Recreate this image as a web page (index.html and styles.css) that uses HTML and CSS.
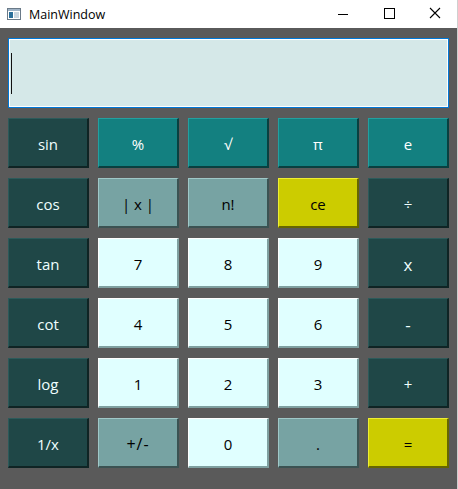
FILE: index.html
```html
<!DOCTYPE html>
<html>
<head>
<meta charset="utf-8">
<link rel="stylesheet" href="styles.css">
</head>
<body>
<div class="window">
  <div class="titlebar">
    <svg class="appicon" width="14" height="12" viewBox="0 0 14 12">
      <rect x="0.5" y="0.5" width="13" height="11" fill="#fff" stroke="#6a7a88"/>
      <rect x="1" y="1" width="12" height="2" fill="#9fb3c6"/>
      <rect x="2" y="4" width="4" height="6" fill="#2a6f9a"/>
      <rect x="7" y="4" width="5" height="6" fill="#c9d6e0"/>
    </svg>
    <span class="title">MainWindow</span>
    <div class="controls">
      <svg class="ctl" width="46" height="28" viewBox="0 0 46 28"><line x1="18" y1="14.5" x2="28" y2="14.5" stroke="#000" stroke-width="1"/></svg>
      <svg class="ctl" width="46" height="28" viewBox="0 0 46 28"><rect x="18.5" y="8.5" width="10" height="10" fill="none" stroke="#000" stroke-width="1"/></svg>
      <svg class="ctl" width="46" height="28" viewBox="0 0 46 28"><path d="M18 8 L28 18 M28 8 L18 18" stroke="#000" stroke-width="1.1"/></svg>
    </div>
  </div>
  <div class="content">
    <div class="display"><span class="cursor"></span></div>
    <div class="grid">
      <div class="btn dark">sin</div>
      <div class="btn teal">%</div>
      <div class="btn teal">√</div>
      <div class="btn teal">π</div>
      <div class="btn teal">e</div>

      <div class="btn dark">cos</div>
      <div class="btn gray">| x |</div>
      <div class="btn gray">n!</div>
      <div class="btn yellow">ce</div>
      <div class="btn dark">÷</div>

      <div class="btn dark">tan</div>
      <div class="btn light">7</div>
      <div class="btn light">8</div>
      <div class="btn light">9</div>
      <div class="btn dark big">x</div>

      <div class="btn dark">cot</div>
      <div class="btn light">4</div>
      <div class="btn light">5</div>
      <div class="btn light">6</div>
      <div class="btn dark big">-</div>

      <div class="btn dark">log</div>
      <div class="btn light">1</div>
      <div class="btn light">2</div>
      <div class="btn light">3</div>
      <div class="btn dark">+</div>

      <div class="btn dark">1/x</div>
      <div class="btn gray wide">+/-</div>
      <div class="btn light">0</div>
      <div class="btn gray">.</div>
      <div class="btn yellow">=</div>
    </div>
  </div>
</div>
</body>
</html>
```
FILE: styles.css
```css
* { box-sizing: border-box; }
html, body { margin: 0; padding: 0; }
body { width: 458px; height: 489px; overflow: hidden; background: #5a5a5a; }

.window {
  width: 458px;
  height: 489px;
  display: flex;
  flex-direction: column;
  background: #5a5a5a;
  border-right: 1px solid #d0d0d0;
  font-family: "Open Sans", "Noto Sans", sans-serif;
}

.titlebar {
  height: 28px;
  background: #ffffff;
  display: flex;
  align-items: center;
  flex: none;
}
.appicon { margin-left: 7px; margin-right: 8px; }
.title { font-size: 12.5px; color: #000; }
.controls { margin-left: auto; display: flex; margin-right: -1px; }
.ctl { display: block; }

.content {
  padding: 10px 8px 0 8px;
  display: flex;
  flex-direction: column;
  gap: 10px;
}

.display {
  width: 441px;
  height: 70px;
  border: 1px solid #0078d7;
  box-shadow: inset 0 0 0 1px #ffffff;
  background: #d5e8e8;
  display: flex;
  align-items: center;
  padding-left: 2px;
}
.cursor {
  width: 1px;
  height: 41px;
  background: #111;
}

.grid {
  display: grid;
  grid-template-columns: repeat(5, 81px);
  grid-auto-rows: 50px;
  column-gap: 9px;
  row-gap: 10px;
}

.btn {
  display: flex;
  align-items: center;
  justify-content: center;
  font-size: 15px;
  border-style: solid;
  border-width: 1px 2px 2px 1px;
  padding-top: 3px;
}
.btn.big { font-size: 17px; }
.btn.wide { font-size: 16px; letter-spacing: 1px; }

.dark {
  background: #1f4747;
  color: #f0ffff;
  border-color: #2c5a5a #0f2424 #0f2424 #2c5a5a;
}
.teal {
  background: #138080;
  color: #ffffff;
  border-color: #22a0a0 #094040 #094040 #22a0a0;
}
.gray {
  background: #77a3a3;
  color: #000;
  border-color: #a0c8c8 #3b5252 #3b5252 #a0c8c8;
}
.light {
  background: #e0ffff;
  color: #000;
  border-color: #ffffff #7fa0a0 #7fa0a0 #ffffff;
}
.yellow {
  background: #cccc00;
  color: #000;
  border-color: #eeee33 #666600 #666600 #eeee33;
}
```
